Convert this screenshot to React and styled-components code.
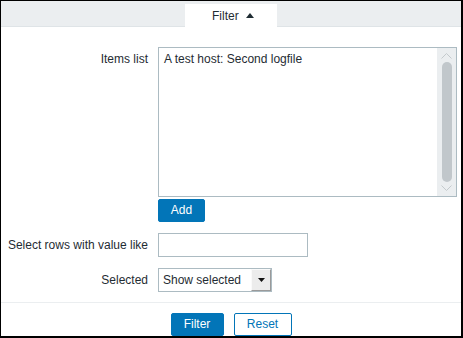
import React from "react";
import styled, { createGlobalStyle } from "styled-components";

const Global = createGlobalStyle`
  html, body { margin: 0; padding: 0; background: #fff; }
  body { font-family: "Liberation Sans", Arial, sans-serif; font-size: 12px; color: #1f2c33; }
  * { box-sizing: border-box; }
`;

const Frame = styled.div`
  width: 463px;
  height: 338px;
  border-style: solid;
  border-color: #000;
  border-width: 1px 2px 2px 1px;
  background: #fff;
  display: flex;
  flex-direction: column;
`;

const TabBar = styled.div`
  height: 26px;
  padding-top: 3px;
  background: #ebeef0;
  border-bottom: 1px solid #dfe4e7;
  display: flex;
  justify-content: center;
  align-items: flex-end;
`;

const Tab = styled.div`
  width: 92px;
  height: 23px;
  margin-bottom: -1px;
  background: #fff;
  padding-left: 27px;
  display: flex;
  align-items: center;
  gap: 7px;
  font-size: 12px;
  color: #1f2c33;
`;

const Form = styled.div`
  display: grid;
  grid-template-columns: 147px auto;
  column-gap: 10px;
  row-gap: 11px;
  padding: 20px 0 10px 0;
  align-items: center;
`;

const Label = styled.div`
  text-align: right;
  line-height: 14px;
  white-space: nowrap;
  align-self: ${(p) => (p.$top ? "start" : "center")};
  padding-top: ${(p) => (p.$top ? "5px" : "0")};
`;

const ListCell = styled.div`
  display: flex;
  flex-direction: column;
  align-items: flex-start;
  gap: 2px;
`;

const ListBox = styled.div`
  width: 299px;
  height: 150px;
  border: 1px solid #acbbc2;
  display: flex;
`;

const ListItems = styled.div`
  flex: 1;
  padding: 4px 5px;
  line-height: 14px;
`;

const Scrollbar = styled.div`
  width: 19px;
  background: #ebeef0;
  display: flex;
  flex-direction: column;
  align-items: center;
  padding: 5px 0 5px 0;
`;

const Thumb = styled.div`
  width: 10px;
  flex: 1;
  margin: 3px 0;
  border-radius: 5px;
  background: #c1c7cb;
`;

const Button = styled.button`
  height: 23px;
  width: ${(p) => p.$w}px;
  padding: 0;
  border: 1px solid #0275b8;
  border-radius: 2px;
  background: ${(p) => (p.$outline ? "#fff" : "#0275b8")};
  color: ${(p) => (p.$outline ? "#0275b8" : "#fff")};
  font-family: "Liberation Sans", Arial, sans-serif;
  font-size: 12px;
  line-height: 21px;
`;

const TextInput = styled.div`
  width: 150px;
  height: 24px;
  border: 1px solid #acbbc2;
  background: #fff;
`;

const Select = styled.div`
  width: 114px;
  height: 24px;
  border: 1px solid #acbbc2;
  background: #fff;
  display: flex;
  align-items: stretch;
`;

const SelectText = styled.div`
  flex: 1;
  padding-left: 4px;
  display: flex;
  align-items: center;
`;

const SelectArrow = styled.div`
  width: 20px;
  background: #ececec;
  border-style: solid;
  border-width: 1px;
  border-color: #fafafa #9a9a9a #9a9a9a #fafafa;
  display: flex;
  align-items: center;
  justify-content: center;
`;

const Footer = styled.div`
  border-top: 1px solid #ebeef0;
  padding-top: 10px;
  display: flex;
  justify-content: center;
  gap: 10px;
`;

const Chevron = ({ up }) => (
  <svg width="11" height="6" viewBox="0 0 11 6">
    <polyline
      points={up ? "0.5,5.5 5.5,0.5 10.5,5.5" : "0.5,0.5 5.5,5.5 10.5,0.5"}
      fill="none"
      stroke="#c4cacd"
      strokeWidth="1"
    />
  </svg>
);

export default function App() {
  return (
    <>
      <Global />
      <Frame>
        <TabBar>
          <Tab>
            <span>Filter</span>
            <svg width="8" height="5" viewBox="0 0 8 5">
              <polygon points="0,5 4,0 8,5" fill="#1f2c33" />
            </svg>
          </Tab>
        </TabBar>
        <Form>
          <Label $top>Items list</Label>
          <ListCell>
            <ListBox>
              <ListItems>A test host: Second logfile</ListItems>
              <Scrollbar>
                <Chevron up />
                <Thumb />
                <Chevron />
              </Scrollbar>
            </ListBox>
            <Button $w={47}>Add</Button>
          </ListCell>
          <Label>Select rows with value like</Label>
          <TextInput />
          <Label>Selected</Label>
          <Select>
            <SelectText>Show selected</SelectText>
            <SelectArrow>
              <svg width="7" height="4" viewBox="0 0 7 4">
                <polygon points="0,0 7,0 3.5,4" fill="#111" />
              </svg>
            </SelectArrow>
          </Select>
        </Form>
        <Footer>
          <Button $w={53}>Filter</Button>
          <Button $w={58} $outline>Reset</Button>
        </Footer>
      </Frame>
    </>
  );
}
